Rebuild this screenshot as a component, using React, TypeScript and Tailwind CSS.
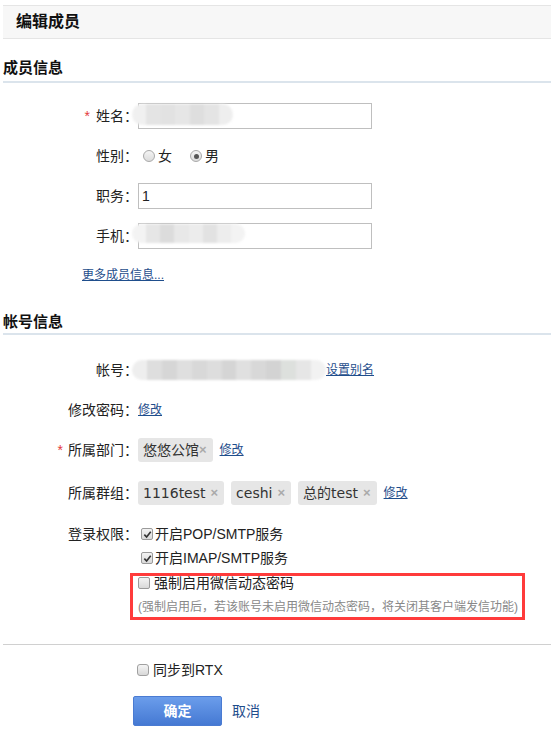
import type { ReactNode } from 'react'

const label = 'w-[138px] shrink-0 text-right text-[14px] text-[#222]'
const link = 'text-[12px] text-[#1f4e8c] underline'

function Mosaic({ cells, className }: { cells: string[]; className: string }) {
  return (
    <div className={`flex overflow-hidden rounded-full blur-[1px] ${className}`}>
      {cells.map((c, i) => (
        <div key={i} className="flex-1" style={{ background: c }} />
      ))}
    </div>
  )
}

function Radio({ checked }: { checked?: boolean }) {
  return (
    <span className="flex h-[12px] w-[12px] items-center justify-center rounded-full border border-[#a9a9a9] bg-gradient-to-b from-[#f4f4f4] to-[#dcdcdc]">
      {checked && <span className="h-[5px] w-[5px] rounded-full bg-[#555]" />}
    </span>
  )
}

function Checkbox({ checked }: { checked?: boolean }) {
  return (
    <span className="flex h-[12px] w-[12px] shrink-0 items-center justify-center rounded-[2px] border border-[#9a9a9a] bg-gradient-to-b from-[#f3f3f3] to-[#d9d9d9]">
      {checked && (
        <svg viewBox="0 0 10 10" className="h-[9px] w-[9px]">
          <path d="M1.5 5.2 L4 7.8 L8.6 2" fill="none" stroke="#333" strokeWidth="1.8" />
        </svg>
      )}
    </span>
  )
}

function Tag({ children, tight }: { children: ReactNode; tight?: boolean }) {
  return (
    <span className="inline-flex h-[24px] items-center rounded-[3px] bg-[#e6e6e6] pl-[5px] pr-[6px] font-['DejaVu_Sans','Noto_Sans_CJK_SC',sans-serif] text-[14px] text-[#333]">
      {children}
      <span
        className={`font-['Liberation_Sans',sans-serif] text-[13px] font-bold text-[#aaa] ${tight ? '' : 'ml-[5px]'}`}
      >
        ×
      </span>
    </span>
  )
}

export default function App() {
  return (
    <div className="w-[551px] bg-white pt-[5px] font-['Liberation_Sans','Noto_Sans_CJK_SC',sans-serif] text-[#222]">
      <div className="ml-[3px] h-[34px] border-y border-[#e5e5e5] bg-[#f7f7f7] pl-[13px] text-[16px] font-bold leading-[32px] text-[#111]">
        编辑成员
      </div>

      <div className="ml-[3px] border-b-2 border-[#dbe4ec] pt-[19px] pb-[3px] text-[15px] font-bold leading-[20px] text-[#111]">
        成员信息
      </div>

      <div className="mt-[13px]">
        <div className="flex h-[40px] items-center">
          <div className={label}>
            <span className="mr-[6px] text-[#e4393c]">*</span>姓名：
          </div>
          <div className="relative">
            <input className="h-[26px] w-[234px] border border-[#bfbfbf] px-[3px] text-[14px] outline-none" />
            <Mosaic
              className="absolute top-[1px] left-[-6px] h-[21px] w-[101px]"
              cells={['#f0f0f0', '#e4e4e4', '#e2e2e2', '#e6e6e6', '#dedede', '#e4e4e4', '#eeeeee']}
            />
          </div>
        </div>
        <div className="flex h-[40px] items-center">
          <div className={label}>性别：</div>
          <div className="flex items-center text-[14px]">
            <span className="ml-[5px]">
              <Radio />
            </span>
            <span className="ml-[3px]">女</span>
            <span className="ml-[18px]">
              <Radio checked />
            </span>
            <span className="ml-[3px]">男</span>
          </div>
        </div>
        <div className="flex h-[40px] items-center">
          <div className={label}>职务：</div>
          <input
            defaultValue="1"
            className="h-[26px] w-[234px] border border-[#bfbfbf] px-[3px] text-[14px] text-[#222] outline-none"
          />
        </div>
        <div className="flex h-[40px] items-center">
          <div className={label}>手机：</div>
          <div className="relative">
            <input className="h-[26px] w-[234px] border border-[#bfbfbf] px-[3px] text-[14px] outline-none" />
            <Mosaic
              className="absolute top-[1px] left-[-6px] h-[19px] w-[113px]"
              cells={['#f3f3f3', '#e6e6e6', '#dcdcdc', '#e8e8e8', '#ececec', '#e2e2e2', '#ededed', '#f3f3f3']}
            />
          </div>
        </div>
        <div className="flex h-[38px] items-center pl-[82px]">
          <a className={link}>更多成员信息...</a>
        </div>
      </div>

      <div className="ml-[3px] border-b-2 border-[#dbe4ec] pt-[18px] pb-[1px] text-[15px] font-bold leading-[20px] text-[#111]">
        帐号信息
      </div>

      <div className="mt-[15px]">
        <div className="flex h-[40px] items-center">
          <div className={label}>帐号：</div>
          <Mosaic
            className="ml-[-6px] h-[20px] w-[194px]"
            cells={['#eeeeee', '#dedede', '#d6d6d6', '#dfdfdf', '#d8d8d8', '#dddddd', '#d5d5d5', '#e0e0e0', '#d8d8d8', '#d3d3d3', '#dde0dd', '#e6e6e6', '#f2f2f2']}
          />
          <a className={link}>设置别名</a>
        </div>
        <div className="flex h-[40px] items-center">
          <div className={label}>修改密码：</div>
          <a className={link}>修改</a>
        </div>
        <div className="flex h-[40px] items-center">
          <div className={label}>
            <span className="mr-[5px] text-[#e4393c]">*</span>所属部门：
          </div>
          <Tag tight>悠悠公馆</Tag>
          <a className={`${link} ml-[7px]`}>修改</a>
        </div>
        <div className="flex h-[46px] items-center">
          <div className={label}>所属群组：</div>
          <div className="flex items-center gap-[7px]">
            <Tag>1116test</Tag>
            <Tag>ceshi</Tag>
            <Tag>总的test</Tag>
            <a className={link}>修改</a>
          </div>
        </div>

        <div className="mt-[6px] flex h-[24px] items-center">
          <div className={label}>登录权限：</div>
          <span className="ml-[3px]">
            <Checkbox checked />
          </span>
          <span className="ml-[2px] text-[14px]">开启POP/SMTP服务</span>
        </div>
        <div className="flex h-[24px] items-center pl-[141px]">
          <Checkbox checked />
          <span className="ml-[2px] text-[14px]">开启IMAP/SMTP服务</span>
        </div>

        <div className="mt-[3px] ml-[130px] w-[395px] border-[3px] border-[#ff3b3b] pl-[5px] pb-[1px]">
          <div className="flex h-[14px] items-center">
            <Checkbox />
            <span className="ml-[4px] text-[14px] leading-[14px]">强制启用微信动态密码</span>
          </div>
          <div className="mt-[8px] text-[12px] leading-[18px] text-[#888]">
            (强制启用后，若该账号未启用微信动态密码，将关闭其客户端发信功能)
          </div>
        </div>
      </div>

      <div className="mt-[24px] ml-[3px] h-px bg-[#d0d0d0]" />

      <div className="mt-[13px] flex h-[24px] items-center pl-[137px]">
        <span className="flex h-[12px] w-[12px] rounded-[3px] border border-[#a0a0a0] bg-gradient-to-b from-[#f5f5f5] to-[#d8d8d8]" />
        <span className="ml-[4px] text-[14px]">同步到RTX</span>
      </div>

      <div className="mt-[14px] flex items-center pl-[133px] pb-[11px]">
        <button className="h-[30px] w-[89px] rounded-[2px] border border-[#4a7bd2] bg-gradient-to-b from-[#6b9deb] to-[#4579d3] text-[14px] font-bold text-white">
          确定
        </button>
        <a className="ml-[10px] text-[14px] text-[#1f4e8c]">取消</a>
      </div>
    </div>
  )
}
